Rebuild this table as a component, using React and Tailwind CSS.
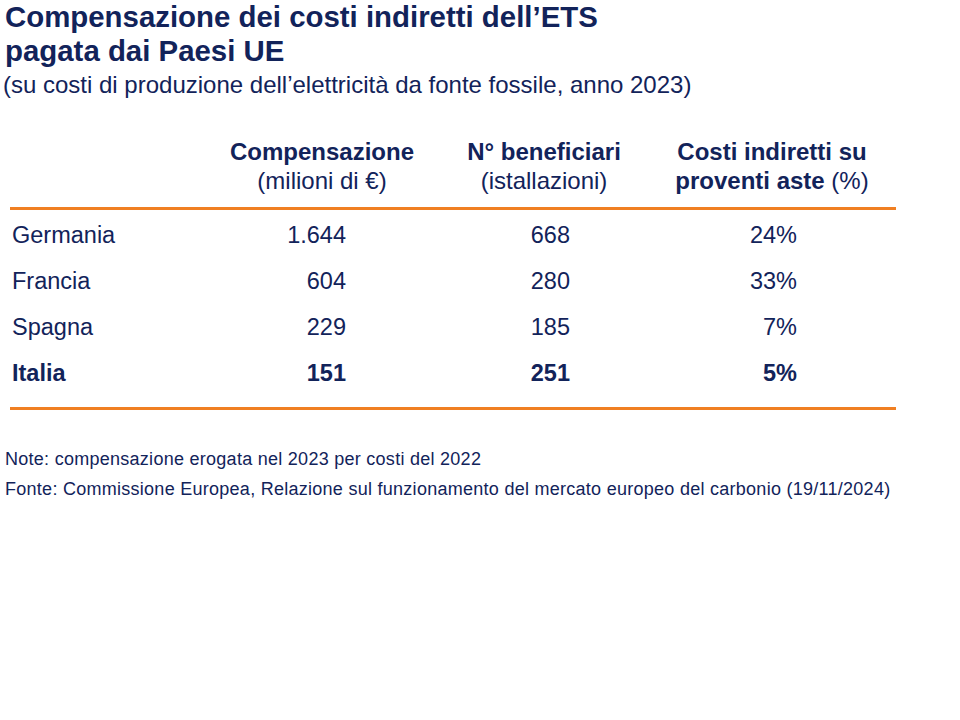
export default function App() {
  const rows = [
    { paese: "Germania", comp: "1.644", ben: "668", costi: "24%" },
    { paese: "Francia", comp: "604", ben: "280", costi: "33%" },
    { paese: "Spagna", comp: "229", ben: "185", costi: "7%" },
    { paese: "Italia", comp: "151", ben: "251", costi: "5%", bold: true },
  ];

  return (
    <div className="w-[960px] h-[720px] bg-white text-[#12235a] font-['Liberation_Sans',Arial,sans-serif] overflow-hidden">
      <div className="pl-[5px]">
        <h1 className="text-[29.4px] leading-[34px] font-bold">
          Compensazione dei costi indiretti dell’ETS
          <br />
          pagata dai Paesi UE
        </h1>
        <p className="text-[24px] leading-[33px] -ml-[2px]">
          (su costi di produzione dell’elettricità da fonte fossile, anno 2023)
        </p>
      </div>

      <div className="ml-[10px] w-[886px] mt-[36px]">
        <div className="flex text-[24px] leading-[29px] text-center">
          <div className="w-[220px]" />
          <div className="w-[184px]">
            <div className="font-bold">Compensazione</div>
            <div>(milioni di €)</div>
          </div>
          <div className="w-[180px] ml-[40px]">
            <div className="font-bold">N° beneficiari</div>
            <div>(istallazioni)</div>
          </div>
          <div className="w-[200px] ml-[38px]">
            <div className="font-bold">Costi indiretti su</div>
            <div>
              <span className="font-bold">proventi aste</span> (%)
            </div>
          </div>
        </div>

        <div className="h-[3px] bg-[#f07f22] mt-[12px]" />

        <div className="pt-[3px] pb-[10px]">
          {rows.map((r) => (
            <div
              key={r.paese}
              className={`flex h-[46px] items-center text-[23.5px] ${r.bold ? "font-bold" : ""}`}
            >
              <div className="w-[210px] pl-[2px]">{r.paese}</div>
              <div className="w-[126px] text-right">{r.comp}</div>
              <div className="w-[224px] text-right">{r.ben}</div>
              <div className="w-[227px] text-right">{r.costi}</div>
            </div>
          ))}
        </div>

        <div className="h-[3px] bg-[#f07f22]" />
      </div>

      <div className="pl-[5px] mt-[34px] text-[18px] leading-[30px] tracking-[0.27px]">
        <p>Note: compensazione erogata nel 2023 per costi del 2022</p>
        <p>Fonte: Commissione Europea, Relazione sul funzionamento del mercato europeo del carbonio (19/11/2024)</p>
      </div>
    </div>
  );
}
